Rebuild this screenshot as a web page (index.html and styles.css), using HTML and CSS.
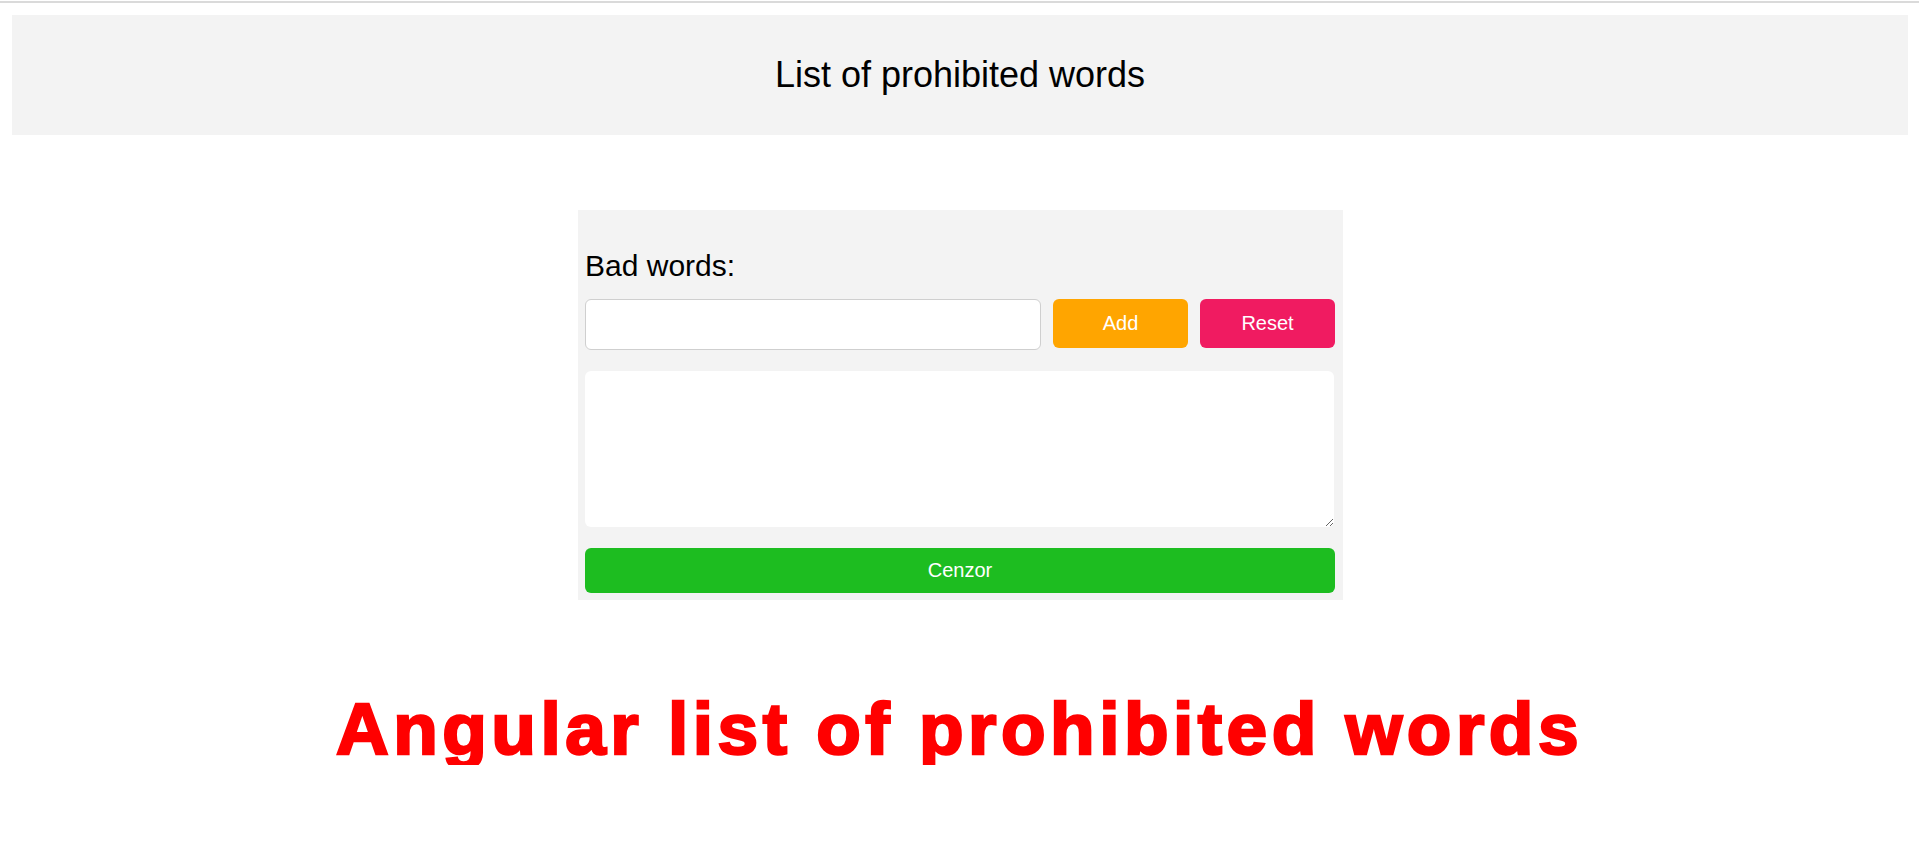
FILE: index.html
```html
<!DOCTYPE html>
<html lang="en">
<head>
<meta charset="utf-8">
<title>List of prohibited words</title>
<link rel="stylesheet" href="styles.css">
</head>
<body>
<div class="topline"></div>
<header class="header">List of prohibited words</header>
<section class="panel">
  <label class="label" for="word">Bad words:</label>
  <div class="row">
    <input id="word" class="input" type="text">
    <button class="btn btn-add">Add</button>
    <button class="btn btn-reset">Reset</button>
  </div>
  <textarea class="text"></textarea>
  <button class="btn btn-cenzor">Cenzor</button>
</section>
<h1 class="title">Angular list of prohibited words</h1>
</body>
</html>
```

FILE: styles.css
```css
html, body {
  margin: 0;
  padding: 0;
  background: #ffffff;
  font-family: "Liberation Sans", Arial, sans-serif;
  color: #000;
}

.topline {
  margin-top: 1px;
  height: 2px;
  background: #dadada;
}

.header {
  margin: 12px 11px 0 12px;
  height: 120px;
  background: #f3f3f3;
  display: flex;
  align-items: center;
  justify-content: center;
  font-size: 36px;
}

.panel {
  box-sizing: border-box;
  width: 765px;
  margin: 75px 0 0 calc(50% - 381.5px);
  padding: 39px 8px 7px 7px;
  background: #f3f3f3;
  display: flex;
  flex-direction: column;
}

.label {
  display: block;
  font-size: 30px;
  line-height: 34px;
}

.row {
  margin-top: 16px;
  display: flex;
  align-items: flex-start;
  gap: 12px;
}

.input {
  box-sizing: border-box;
  width: 456px;
  height: 51px;
  border: 1px solid #cfcfcf;
  border-radius: 6px;
  background: #fff;
  padding: 0 10px;
  font-size: 20px;
  font-family: inherit;
  outline: none;
}

.btn {
  box-sizing: border-box;
  border: none;
  border-radius: 6px;
  color: #fff;
  font-family: inherit;
  font-size: 20px;
  padding: 0;
  cursor: pointer;
}

.btn-add {
  width: 135px;
  height: 49px;
  background: #ffa500;
}

.btn-reset {
  width: 135px;
  height: 49px;
  background: #f01b61;
}

.text {
  box-sizing: border-box;
  margin-top: 21px;
  width: 749px;
  height: 156px;
  border: none;
  border-radius: 6px;
  background: #fff;
  outline: none;
  font-family: inherit;
  display: block;
}

.btn-cenzor {
  margin-top: 21px;
  width: 750px;
  height: 45px;
  background: #1dbd20;
}

.title {
  margin: 92px 0 0;
  text-align: center;
  color: #ff0000;
  font-size: 73px;
  line-height: 73px;
  font-weight: 700;
  letter-spacing: 4.5px;
  -webkit-text-stroke: 2.5px #ff0000;
}
```
